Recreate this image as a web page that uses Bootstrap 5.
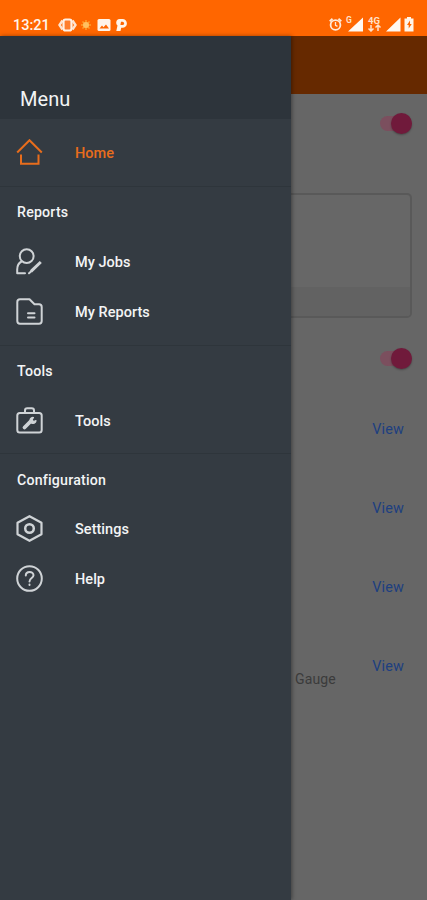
<!DOCTYPE html>
<html lang="en">
<head>
<meta charset="utf-8">
<meta name="viewport" content="width=device-width, initial-scale=1">
<title>Menu</title>
<link href="https://cdn.jsdelivr.net/npm/bootstrap@5.3.0/dist/css/bootstrap.min.css" rel="stylesheet">
<style>
body{font-family:Roboto,"Liberation Sans",sans-serif;background:#666;color:#f3f4f5;height:900px;overflow:hidden}
svg{display:block;flex:none}
.status{height:36px;background:#ff6600;padding:13px 12px 0 13px}
.clock{font-size:14.5px;line-height:22px;padding-top:2px;font-weight:500;color:#fff4ea}
.drawer{width:291px;height:864px;background:#343b42;box-shadow:1px 0 4px rgba(0,0,0,.4);z-index:1}
.drawer-head{height:83px;background:#2d343b;padding:0 0 5px 20px;font-size:20px;line-height:30px;letter-spacing:.05px}
.group{border-top:1px solid #2e353b;padding-bottom:8px}
.group + .group{margin-top:-.4px}
.group-first{padding:9px 0 8px}
.group-title{height:50px;padding:2px 0 0 17px;font-size:14.2px;font-weight:500;letter-spacing:.2px}
.entry{height:50px;padding:2px 0 0 16px;font-size:14.5px;font-weight:500;letter-spacing:.04px;gap:32px;color:#f3f4f5;text-decoration:none}
.entry svg{width:27px;height:27px;margin-top:-3px;fill:none;stroke:#cfd3d6;stroke-width:2;stroke-linejoin:round;stroke-linecap:round}
.entry.current{color:#e86d1c;padding-top:1px}
.entry.current svg{stroke:#e86d1c}
.appbar{height:58px;background:#662900}
.switch-row{height:30px;padding-right:15px;margin-top:14px}
.switch-row.second{margin-top:25px}
.track{width:32px;height:15px;border-radius:8px;background:#7b4f5e}
.thumb{width:21px;height:21px;border-radius:50%;background:#701a3b;margin-top:-3px;box-shadow:0 1px 2px rgba(0,0,0,.3)}
.panel{height:125px;margin:55px 15px 0 0;border:2px solid #595959;border-left:0;border-radius:0 5px 5px 0;background:#676767}
.panel-foot{height:29px;background:#626262;border-radius:0 0 4px 0}
.views{padding-top:47px}
.view-row{height:79px;padding:0 23px 0 4px;font-size:14.4px;line-height:20px}
.view-row a{color:#1d3f80;text-decoration:none;letter-spacing:.15px}
.gauge{color:#3b3b3b;font-size:14px;letter-spacing:.15px;margin-top:12px}
</style>
</head>
<body>
<header class="status d-flex justify-content-between align-items-start">
  <div class="d-flex align-items-center">
    <span class="clock">13:21</span>
    <svg class="ms-2" width="19" height="16" viewBox="0 0 19 16"><path d="M4.500 3.500 1.500 8l3 4.500M14.500 3.500l3 4.500-3 4.500" fill="none" stroke="#ffe3cf" stroke-width="2.400"/><rect x="5.500" y="2.500" width="8" height="11" rx="2" fill="#ff7d2c" stroke="#fff0e5" stroke-width="2.200"/></svg>
    <svg width="16" height="14" viewBox="0 0 16 14"><path d="M9 2v10M4 7h10M5.500 3.500l7 7M12.500 3.500l-7 7" stroke="#ffa02d" stroke-width="1.500"/><circle cx="9" cy="7" r="3" fill="#ffc061"/></svg>
    <svg class="ms-1" width="14" height="14" viewBox="0 0 14 14"><rect x=".5" y="1" width="13" height="12" rx="1.500" fill="#fff4ea"/><path d="M2.500 10.500 5 7.500l1.500 1.700L9 6.500l3 4z" fill="#ff6600"/></svg>
    <svg class="ms-1" width="14" height="14" viewBox="0 0 14 14"><path d="M4.500 1h3a4.200 4.200 0 0 1 0 8.800H6.200L5.500 13H1.300L2.500 7.500Q1 6.500 1.200 4.500 1.500 1 4.500 1z" fill="#fff4ea"/><path d="M6 3.800h1.500a1.600 1.600 0 0 1 0 3.200H5.400z" fill="#ff6600"/></svg>
  </div>
  <svg width="86" height="19" viewBox="0 0 86 19"><g fill="none" stroke="#ffe9d9" stroke-width="1.800"><circle cx="6.500" cy="12" r="4.900"/><path d="M.7 8.200 3.500 5.800M12.300 8.200 9.500 5.800"/><path d="M6.500 9v3.300l2 1" stroke-width="1.300"/></g><text x="17" y="9.500" font-size="8.500" font-weight="700" fill="#ffe0cb">G</text><path d="M19 18.500 34 4.500v14zM57 18.500 71.500 4.500v14z" fill="#fff8f2"/><text x="39" y="10.500" font-size="9.500" font-weight="700" fill="#ffe0cb" textLength="12">4G</text><path d="M42 12v6m-2.500-2.500L42 18l2.500-2.500M49 18v-6m-2.500 2.500L49 12l2.500 2.500" fill="none" stroke="#ffe0cb" stroke-width="1.500"/><path d="M75.500 5.500h2.500V4h4v1.500h2.500V18.500h-9z" fill="#fff4ea"/><path d="m81 7.500-3 4.500h1.700v3.500l3-4.500H81z" fill="#ff6600"/></svg>
</header>
<div class="d-flex">
  <nav class="drawer flex-shrink-0">
    <div class="drawer-head d-flex align-items-end">Menu</div>
    <div class="group-first">
      <a href="#" class="entry current d-flex align-items-center"><svg viewBox="0 0 27 27"><path d="M1.200 13.500 13.500 1.200l12.300 12.300M5 15.500v9.300h17.500v-9.300" stroke-linejoin="miter" stroke-linecap="butt"/></svg>Home</a>
    </div>
    <section class="group">
      <div class="group-title d-flex align-items-center">Reports</div>
      <a href="#" class="entry d-flex align-items-center"><svg viewBox="0 0 27 27"><circle cx="10.700" cy="8.200" r="6.900"/><path d="M5.500 13.500C2.700 15 1.200 18 1.200 21.500v3.700H9"/><path d="m15 23.300 9.800-9.300" stroke-width="3" stroke-linecap="butt"/><path d="m13 25.300 2-1.800"/></svg>My Jobs</a>
      <a href="#" class="entry d-flex align-items-center"><svg viewBox="0 0 27 27"><path d="M4 1.300h9.500l5 5H23q2.700 0 2.700 2.700v14q0 2.700-2.700 2.700H4q-2.700 0-2.700-2.700V4Q1.300 1.300 4 1.300zM12 15.200h6.500M12 19.500h6.500"/></svg>My Reports</a>
    </section>
    <section class="group">
      <div class="group-title d-flex align-items-center">Tools</div>
      <a href="#" class="entry d-flex align-items-center"><svg viewBox="0 0 27 27"><rect x="1.300" y="6" width="24.400" height="19.500" rx="2.500"/><path d="M9 6V3.500Q9 1.200 11.300 1.200h4.400Q18 1.200 18 3.500V6"/><path d="m8.500 20.500 6-6" stroke-width="3.800"/><path d="M17.500 10.500a3 3 0 1 0 2.500 3l-2.500 1-1.500-1.500z" fill="#cfd3d6" stroke-width="1.200"/></svg>Tools</a>
    </section>
    <section class="group">
      <div class="group-title d-flex align-items-center">Configuration</div>
      <a href="#" class="entry d-flex align-items-center"><svg viewBox="0 0 27 27"><path d="m13.500 1.200 12 6.500v11.600l-12 6.500-12-6.500V7.700z" stroke-width="2.200"/><circle cx="13.500" cy="13.500" r="4.300" stroke-width="2.500"/></svg>Settings</a>
      <a href="#" class="entry d-flex align-items-center"><svg viewBox="0 0 27 27"><circle cx="13.500" cy="13.500" r="12.300"/><path d="M9.800 10.500c0-4.700 7.700-4.700 7.700-.2 0 2.700-4 2.900-4 6.200M13.500 19.500v.6"/></svg>Help</a>
    </section>
  </nav>
  <main class="flex-grow-1">
    <div class="appbar"></div>
    <div class="switch-row d-flex justify-content-end align-items-center"><div class="track d-flex justify-content-end"><div class="thumb flex-shrink-0"></div></div></div>
    <div class="panel d-flex flex-column justify-content-end"><div class="panel-foot"></div></div>
    <div class="switch-row second d-flex justify-content-end align-items-center"><div class="track d-flex justify-content-end"><div class="thumb flex-shrink-0"></div></div></div>
    <div class="views">
      <div class="view-row d-flex justify-content-end"><a href="#">View</a></div>
      <div class="view-row d-flex justify-content-end"><a href="#">View</a></div>
      <div class="view-row d-flex justify-content-end"><a href="#">View</a></div>
      <div class="view-row d-flex justify-content-between"><span class="gauge">Gauge</span><a href="#">View</a></div>
    </div>
  </main>
</div>
<script src="https://cdn.jsdelivr.net/npm/bootstrap@5.3.0/dist/js/bootstrap.bundle.min.js"></script>
</body>
</html>
